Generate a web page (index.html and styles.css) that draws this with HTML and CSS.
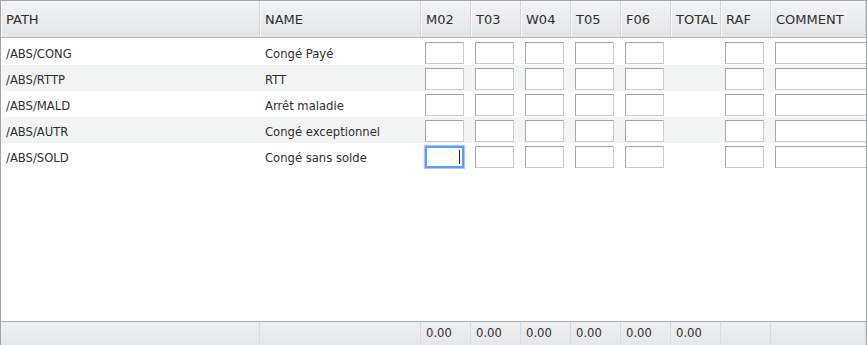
FILE: index.html
```html
<!DOCTYPE html>
<html lang="fr">
<head>
    <meta charset="UTF-8">
    <title>Saisie des absences</title>
    <link rel="stylesheet" href="styles.css">
</head>
<body>
    <div class="grid">
        <div class="row head">
            <div class="cell">PATH</div>
            <div class="cell">NAME</div>
            <div class="cell">M02</div>
            <div class="cell">T03</div>
            <div class="cell">W04</div>
            <div class="cell">T05</div>
            <div class="cell">F06</div>
            <div class="cell">TOTAL</div>
            <div class="cell">RAF</div>
            <div class="cell">COMMENT</div>
        </div>

        <div class="body" id="rows"></div>

        <div class="row foot">
            <div class="cell"></div>
            <div class="cell"></div>
            <div class="cell">0.00</div>
            <div class="cell">0.00</div>
            <div class="cell">0.00</div>
            <div class="cell">0.00</div>
            <div class="cell">0.00</div>
            <div class="cell">0.00</div>
            <div class="cell"></div>
            <div class="cell"></div>
        </div>
    </div>

    <script>
        // Absence codes shown in the grid
        const codes = [
            { path: '/ABS/CONG', name: 'Congé Payé' },
            { path: '/ABS/RTTP', name: 'RTT' },
            { path: '/ABS/MALD', name: 'Arrêt maladie' },
            { path: '/ABS/AUTR', name: 'Congé exceptionnel' },
            { path: '/ABS/SOLD', name: 'Congé sans solde' }
        ];

        function buildRows() {
            const body = document.getElementById('rows');

            codes.forEach((code, i) => {
                const row = document.createElement('div');
                row.className = 'row line';

                let html = `<div class="cell text">${code.path}</div>`;
                html += `<div class="cell text">${code.name}</div>`;
                for (let d = 0; d < 5; d++) {
                    const focused = (i === codes.length - 1 && d === 0);
                    html += `<div class="cell"><span class="box${focused ? ' focused' : ''}"><input type="text"></span></div>`;
                }
                html += '<div class="cell"></div>';
                html += '<div class="cell"><span class="box"><input type="text"></span></div>';
                html += '<div class="cell"><span class="box wide"><input type="text"></span></div>';

                row.innerHTML = html;
                body.appendChild(row);
            });
        }

        buildRows();
    </script>
</body>
</html>
```

FILE: styles.css
```css
* {
    margin: 0;
    padding: 0;
    box-sizing: border-box;
}

body {
    font-family: 'DejaVu Sans', Verdana, sans-serif;
    color: #2e2e2e;
    background: #ffffff;
    overflow: hidden;
}

.grid {
    width: 867px;
    height: 348px;
    border: 1px solid #a3a5a7;
    display: flex;
    flex-direction: column;
    overflow: hidden;
}

.row {
    display: grid;
    grid-template-columns: 259px 161px repeat(7, 50px) 1fr;
}

.cell {
    white-space: nowrap;
    overflow: hidden;
}

/* header */
.head {
    height: 37px;
    background: linear-gradient(#f3f4f5, #e3e5e7);
    border-bottom: 1px solid #b4b7ba;
    font-size: 13px;
}

.head .cell {
    padding: 11px 0 0 5px;
    border-right: 1px solid #d3d6d9;
    box-shadow: inset 1px 0 0 #f8f9fa;
}

/* body rows */
.body {
    flex: 1;
    padding-top: 1px;
}

.line {
    height: 26px;
    font-size: 11.6px;
}

.line:nth-child(even) {
    background: #f3f5f4;
}

.line .text {
    padding: 8px 0 0 5px;
}

.box {
    display: block;
    position: relative;
    width: 39px;
    height: 22px;
    margin: 3px 0 0 4px;
}

.box.wide {
    width: 130px;
}

.box input {
    display: block;
    width: 100%;
    height: 100%;
    border: 1px solid;
    border-color: #a2a2a2 #cbcbcb #cbcbcb #a8a8a8;
    background: #ffffff;
    outline: none;
    font: inherit;
}

.box.focused input {
    border: 2px solid #5a9ff5;
    box-shadow: 0 0 1px 1px #a8cdf9;
}

.box.focused::after {
    content: '';
    position: absolute;
    right: 4px;
    top: 4px;
    width: 1px;
    height: 14px;
    background: #222222;
}

/* footer totals */
.foot {
    height: 26px;
    background: linear-gradient(#eeeff0, #e4e6e8);
    border-top: 1px solid #a9acaf;
    font-size: 11.6px;
}

.foot .cell {
    padding: 4px 0 0 5px;
    border-right: 1px solid #d9dcdf;
}
```
